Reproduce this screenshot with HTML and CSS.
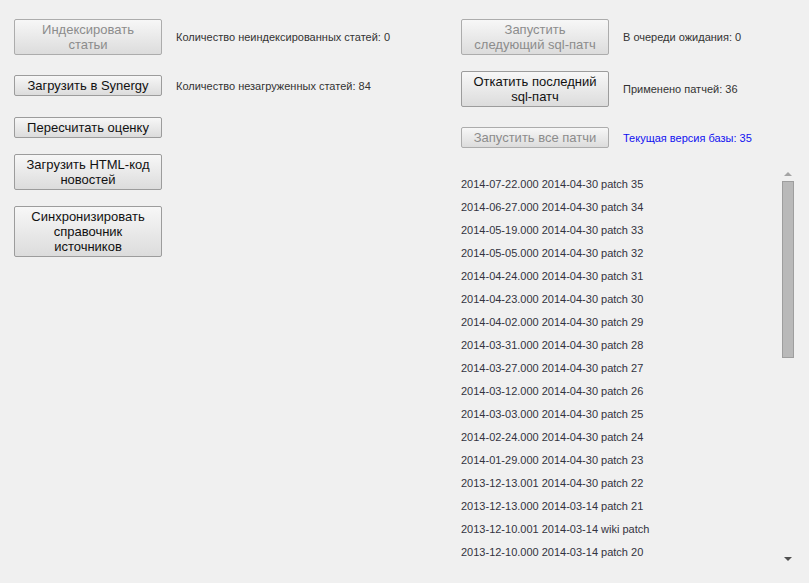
FILE: index.html
```html
<!DOCTYPE html>
<html>
  <head>
    <meta charset="utf-8" />
    <title>Обслуживание базы</title>
    <link rel="stylesheet" href="styles.css">
  </head>
  <body>
    <div class="page">
      <div class="col col-left">
        <div class="row">
          <button class="button" disabled>Индексировать<br>статьи</button>
          <span class="info">Количество неиндексированных статей: 0</span>
        </div>
        <div class="row gap-20">
          <button class="button">Загрузить в Synergy</button>
          <span class="info">Количество незагруженных статей: 84</span>
        </div>
        <div class="row gap-21">
          <button class="button">Пересчитать оценку</button>
        </div>
        <div class="row gap-16">
          <button class="button">Загрузить HTML-код<br>новостей</button>
        </div>
        <div class="row gap-16">
          <button class="button">Синхронизировать<br>справочник<br>источников</button>
        </div>
      </div>
      <div class="col col-right">
        <div class="row">
          <button class="button" disabled>Запустить<br>следующий sql-патч</button>
          <span class="info">В очереди ожидания: 0</span>
        </div>
        <div class="row gap-16">
          <button class="button">Откатить последний<br>sql-патч</button>
          <span class="info">Применено патчей: 36</span>
        </div>
        <div class="row gap-20">
          <button class="button" disabled>Запустить все патчи</button>
          <span class="info current">Текущая версия базы: 35</span>
        </div>
        <div class="patches">
          <ul class="patch-list">
            <li>2014-07-22.000 2014-04-30 patch 35</li>
            <li>2014-06-27.000 2014-04-30 patch 34</li>
            <li>2014-05-19.000 2014-04-30 patch 33</li>
            <li>2014-05-05.000 2014-04-30 patch 32</li>
            <li>2014-04-24.000 2014-04-30 patch 31</li>
            <li>2014-04-23.000 2014-04-30 patch 30</li>
            <li>2014-04-02.000 2014-04-30 patch 29</li>
            <li>2014-03-31.000 2014-04-30 patch 28</li>
            <li>2014-03-27.000 2014-04-30 patch 27</li>
            <li>2014-03-12.000 2014-04-30 patch 26</li>
            <li>2014-03-03.000 2014-04-30 patch 25</li>
            <li>2014-02-24.000 2014-04-30 patch 24</li>
            <li>2014-01-29.000 2014-04-30 patch 23</li>
            <li>2013-12-13.001 2014-04-30 patch 22</li>
            <li>2013-12-13.000 2014-03-14 patch 21</li>
            <li>2013-12-10.001 2014-03-14 wiki patch</li>
            <li>2013-12-10.000 2014-03-14 patch 20</li>
          </ul>
          <div class="scrollbar">
            <div class="arrow arrow-up"></div>
            <div class="thumb"></div>
            <div class="track"></div>
            <div class="arrow arrow-down"></div>
          </div>
        </div>
      </div>
    </div>
  </body>
</html>
```

FILE: styles.css
```css
html {
  font-family: "Liberation Sans", Arial, Helvetica, sans-serif;
}
body {
  margin: 0;
  background-color: #f0f0f0;
  color: #333;
}
.page {
  display: flex;
  padding: 19px 0 0 14px;
}
.col {
  display: flex;
  flex-direction: column;
}
.col-left {
  width: 447px;
}
.col-right {
  flex: 1;
}
.row {
  display: flex;
  align-items: center;
}
.gap-16 {
  margin-top: 16px;
}
.gap-20 {
  margin-top: 20px;
}
.gap-21 {
  margin-top: 21px;
}
.button {
  box-sizing: border-box;
  width: 148px;
  flex: none;
  padding: 2px 4px;
  font-family: inherit;
  font-size: 13px;
  line-height: 15px;
  color: #111;
  text-align: center;
  background: linear-gradient(#f7f7f7, #dcdcdc);
  border: 1px solid #9c9c9c;
  border-radius: 2px;
  outline: none;
}
.button:disabled {
  color: #8c8c8c;
  border-color: #acacac;
}
.info {
  margin-left: 14px;
  font-size: 11px;
  color: #333;
}
.current {
  color: #1010f0;
}
.patches {
  display: flex;
  margin-top: 18px;
  width: 334px;
  height: 402px;
}
.patch-list {
  flex: 1;
  margin: 0;
  padding: 7px 0 0 0;
  list-style: none;
  overflow: hidden;
}
.patch-list li {
  font-size: 11px;
  line-height: 23px;
  color: #333340;
  white-space: nowrap;
}
.scrollbar {
  display: flex;
  flex-direction: column;
  align-items: center;
  width: 14px;
}
.arrow {
  width: 0;
  height: 0;
  border-left: 4px solid transparent;
  border-right: 4px solid transparent;
}
.arrow-up {
  margin-top: 6px;
  border-bottom: 4px solid #a4a4a4;
}
.arrow-down {
  margin-bottom: 7px;
  border-top: 4px solid #505050;
}
.thumb {
  box-sizing: border-box;
  margin-top: 5px;
  width: 12px;
  height: 177px;
  background-color: #b9b9b9;
  border: 1px solid #9e9e9e;
}
.track {
  flex: 1;
}
```
